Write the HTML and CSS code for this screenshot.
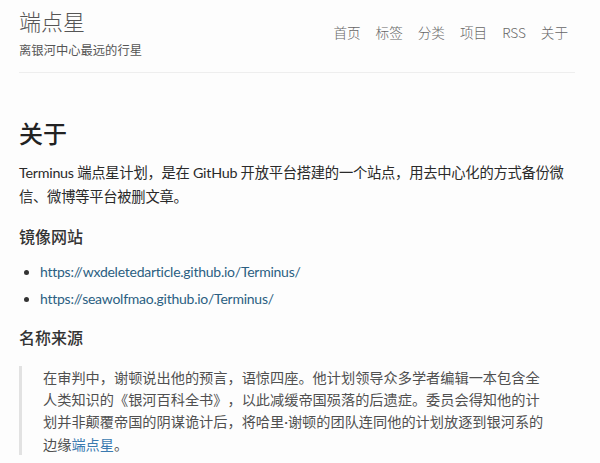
FILE: index.html
```html
<!DOCTYPE html>
<html lang="zh-CN">
<head>
<meta charset="utf-8">
<title>关于 - 端点星</title>
<link rel="stylesheet" href="styles.css">
</head>
<body>
<div class="page">
  <header class="site-header">
    <div class="brand">
      <div class="site-title">端点星</div>
      <div class="site-desc">离银河中心最远的行星</div>
    </div>
    <nav class="nav">
      <a href="#">首页</a>
      <a href="#">标签</a>
      <a href="#">分类</a>
      <a href="#">项目</a>
      <a href="#">RSS</a>
      <a href="#">关于</a>
    </nav>
  </header>
  <main class="post">
    <h1 class="post-title">关于</h1>
    <p class="para">Terminus 端点星计划，是在 GitHub 开放平台搭建的一个站点，用去中心化的方式备份微信、微博等平台被删文章。</p>
    <h2 class="sub">镜像网站</h2>
    <ul class="links">
      <li><a href="#">https://wxdeletedarticle.github.io/Terminus/</a></li>
      <li><a href="#">https://seawolfmao.github.io/Terminus/</a></li>
    </ul>
    <h2 class="sub">名称来源</h2>
    <blockquote class="quote">在审判中，谢顿说出他的预言，语惊四座。他计划领导众多学者编辑一本包含全人类知识的《银河百科全书》，以此减缓帝国殒落的后遗症。委员会得知他的计划并非颠覆帝国的阴谋诡计后，将哈里<span class="dot">·</span>谢顿的团队连同他的计划放逐到银河系的边缘<a href="#">端点星</a>。</blockquote>
  </main>
</div>
</body>
</html>
```

FILE: styles.css
```css
html, body {
  margin: 0;
  padding: 0;
  background: #fdfdfd;
}
body {
  font-family: "Lato", "Noto Sans CJK SC", sans-serif;
  color: #333;
}
a {
  text-decoration: none;
}
.page {
  padding: 0 25px 0 19px;
}
.site-header {
  display: flex;
  justify-content: space-between;
  align-items: flex-start;
  padding-top: 6px;
  height: 66px;
  border-bottom: 1px solid #eeeeee;
}
.site-title {
  font-family: "Noto Sans CJK SC", sans-serif;
  font-weight: 300;
  font-size: 22px;
  line-height: 28px;
  color: #555;
}
.site-desc {
  font-family: "Noto Sans CJK SC", sans-serif;
  font-size: 12.3px;
  line-height: 18px;
  margin-top: 7px;
  color: #555;
}
.nav {
  display: flex;
  gap: 15px;
  padding-top: 16px;
  padding-right: 7px;
}
.nav a {
  font-family: "Noto Sans CJK SC", sans-serif;
  font-weight: 300;
  font-size: 13.6px;
  line-height: 20px;
  color: #666;
}
.post {
  padding-top: 44px;
}
.post-title {
  margin: 0;
  font-family: "Noto Sans CJK SC", sans-serif;
  font-weight: 500;
  font-size: 24px;
  line-height: 32px;
  color: #222;
}
.para {
  margin: 12px 0 0;
  font-size: 14.3px;
  letter-spacing: -0.25px;
  line-height: 24px;
  color: #2a2a2a;
}
.sub {
  margin: 15px 0 0;
  font-family: "Noto Sans CJK SC", sans-serif;
  font-weight: 500;
  font-size: 16px;
  line-height: 24px;
  color: #333;
}
.links {
  margin: 10px 0 0;
  padding-left: 21px;
}
.links li {
  font-size: 14px;
  line-height: 27px;
  letter-spacing: -0.25px;
  color: #333;
}
.links a {
  color: #2b5f82;
}
.links + .sub {
  margin-top: 13px;
}
.quote {
  margin: 17px 0 0;
  border-left: 3px solid #e2e2e2;
  padding: 0 27px 0 21px;
  font-family: "Noto Sans CJK SC", sans-serif;
  font-size: 14.2px;
  line-height: 22px;
  color: #505050;
  text-spacing-trim: space-all;
}
.quote .dot {
  font-family: "Lato", sans-serif;
}
.quote a {
  color: #3a7ab0;
}
```
